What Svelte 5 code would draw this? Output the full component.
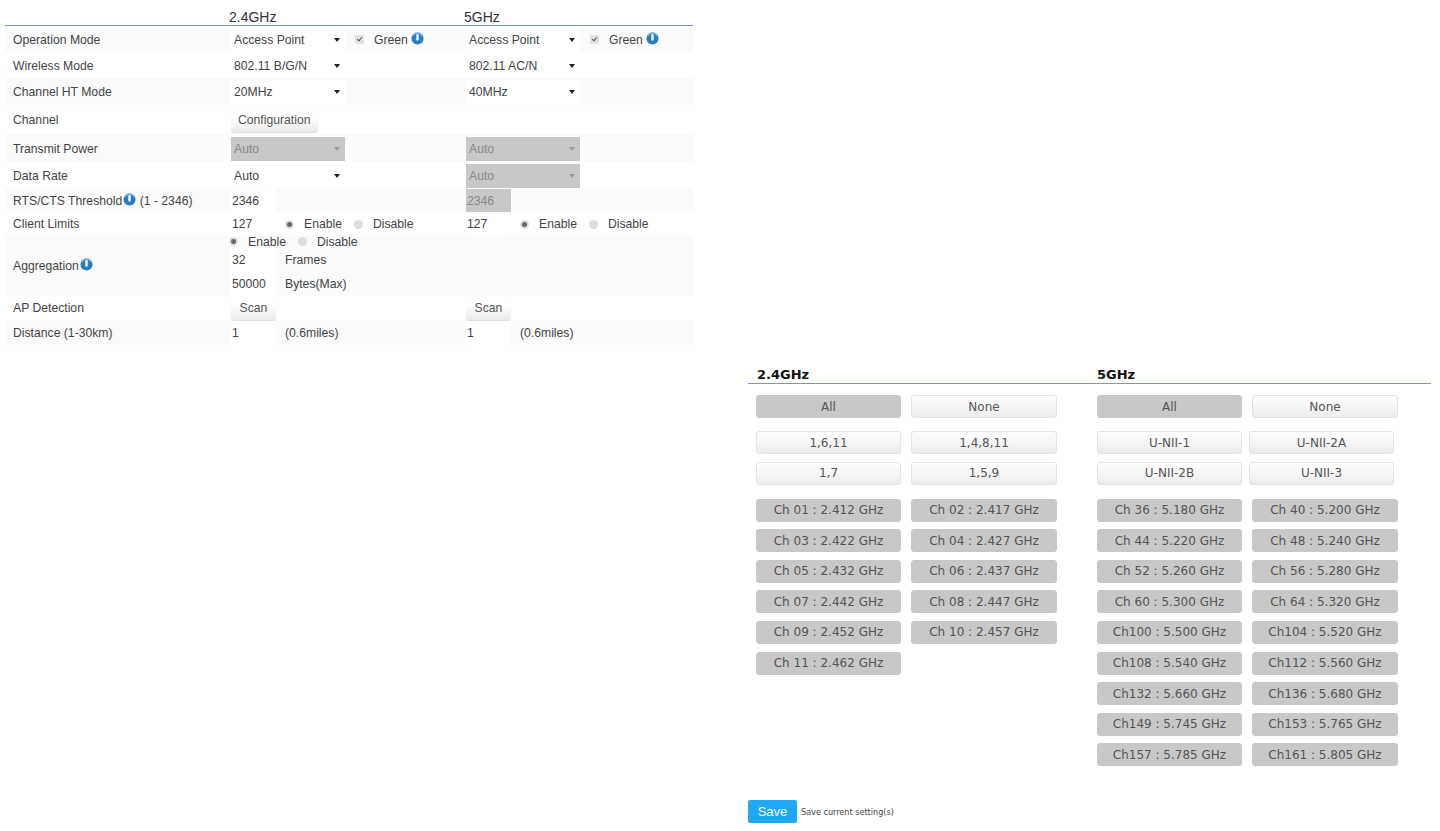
<script>
  const left24 = [["All", "on"], ["None", ""]];
  const presets24 = ["1,6,11", "1,4,8,11", "1,7", "1,5,9"];
  const presets5 = ["U-NII-1", "U-NII-2A", "U-NII-2B", "U-NII-3"];

  const ch24 = [
    "Ch 01 : 2.412 GHz", "Ch 02 : 2.417 GHz", "Ch 03 : 2.422 GHz", "Ch 04 : 2.427 GHz",
    "Ch 05 : 2.432 GHz", "Ch 06 : 2.437 GHz", "Ch 07 : 2.442 GHz", "Ch 08 : 2.447 GHz",
    "Ch 09 : 2.452 GHz", "Ch 10 : 2.457 GHz", "Ch 11 : 2.462 GHz"
  ];
  const ch5 = [
    "Ch 36 : 5.180 GHz", "Ch 40 : 5.200 GHz", "Ch 44 : 5.220 GHz", "Ch 48 : 5.240 GHz",
    "Ch 52 : 5.260 GHz", "Ch 56 : 5.280 GHz", "Ch 60 : 5.300 GHz", "Ch 64 : 5.320 GHz",
    "Ch100 : 5.500 GHz", "Ch104 : 5.520 GHz", "Ch108 : 5.540 GHz", "Ch112 : 5.560 GHz",
    "Ch132 : 5.660 GHz", "Ch136 : 5.680 GHz", "Ch149 : 5.745 GHz", "Ch153 : 5.765 GHz",
    "Ch157 : 5.785 GHz", "Ch161 : 5.805 GHz"
  ];
</script>

{#snippet info()}
  <svg class="info" viewBox="0 0 14 14" width="13" height="13" aria-hidden="true">
    <circle cx="7" cy="7" r="6.5" fill="#2a7cc0" />
    <path d="M1.6 4.2a6 6 0 0 1 10.8 0" fill="none" stroke="#8fc4ea" stroke-width="1.4" />
    <rect x="5.6" y="2.2" width="2.8" height="7.2" rx="1.2" fill="#e8f3fb" />
  </svg>
{/snippet}

{#snippet sel(value, disabled = false)}
  <span class="sel" class:off={disabled}>
    <select {disabled}><option>{value}</option></select>
  </span>
{/snippet}

{#snippet green()}
  <label class="green"><input type="checkbox" checked /><span>Green</span>{@render info()}</label>
{/snippet}

{#snippet endis(name)}
  <label class="radio"><input type="radio" {name} checked />Enable</label>
  <label class="radio"><input type="radio" {name} />Disable</label>
{/snippet}

<div class="page">
  <section class="settings">
    <div class="heads">
      <span></span><span>2.4GHz</span><span>5GHz</span>
    </div>

    <div class="row" style="height:26px">
      <div class="name">Operation Mode</div>
      <div class="cell">{@render sel("Access Point")}{@render green()}</div>
      <div class="cell">{@render sel("Access Point")}{@render green()}</div>
    </div>
    <div class="row" style="height:26px">
      <div class="name">Wireless Mode</div>
      <div class="cell">{@render sel("802.11 B/G/N")}</div>
      <div class="cell">{@render sel("802.11 AC/N")}</div>
    </div>
    <div class="row" style="height:27px">
      <div class="name">Channel HT Mode</div>
      <div class="cell">{@render sel("20MHz")}</div>
      <div class="cell">{@render sel("40MHz")}</div>
    </div>
    <div class="row" style="height:29px">
      <div class="name">Channel</div>
      <div class="cell"><button class="plain">Configuration</button></div>
      <div class="cell"></div>
    </div>
    <div class="row" style="height:28px">
      <div class="name">Transmit Power</div>
      <div class="cell">{@render sel("Auto", true)}</div>
      <div class="cell">{@render sel("Auto", true)}</div>
    </div>
    <div class="row" style="height:26px">
      <div class="name">Data Rate</div>
      <div class="cell">{@render sel("Auto")}</div>
      <div class="cell">{@render sel("Auto", true)}</div>
    </div>
    <div class="row" style="height:23px">
      <div class="name">RTS/CTS Threshold{@render info()} (1 - 2346)</div>
      <div class="cell"><input class="num" value="2346" /></div>
      <div class="cell"><input class="num" value="2346" disabled /></div>
    </div>
    <div class="row" style="height:24px">
      <div class="name">Client Limits</div>
      <div class="cell"><input class="num" value="127" />{@render endis("c24")}</div>
      <div class="cell"><input class="num" value="127" />{@render endis("c5")}</div>
    </div>
    <div class="row flat" style="height:61px">
      <div class="name">Aggregation{@render info()}</div>
      <div class="stack">
        <div class="line first">{@render endis("agg")}</div>
        <div class="line"><input class="num" value="32" /><span>Frames</span></div>
        <div class="line"><input class="num" value="50000" /><span>Bytes(Max)</span></div>
      </div>
      <div class="cell"></div>
    </div>
    <div class="row flat" style="height:24px">
      <div class="name">AP Detection</div>
      <div class="cell"><button class="plain">Scan</button></div>
      <div class="cell"><button class="plain">Scan</button></div>
    </div>
    <div class="row flat" style="height:25px">
      <div class="name">Distance (1-30km)</div>
      <div class="cell"><input class="num" value="1" /><span class="unit">(0.6miles)</span></div>
      <div class="cell"><input class="num" value="1" /><span class="unit">(0.6miles)</span></div>
    </div>
  </section>

  <section class="channels">
    <div class="chan-heads"><h3>2.4GHz</h3><h3>5GHz</h3></div>
    <div class="bands">
      <div class="band">
        <div class="grid">
          {#each left24 as [label, on]}
            <button class="ch" class:on={on === "on"}>{label}</button>
          {/each}
        </div>
        <div class="grid presets">
          {#each presets24 as p}<button class="ch">{p}</button>{/each}
        </div>
        <div class="grid list">
          {#each ch24 as c}<button class="ch on">{c}</button>{/each}
        </div>
      </div>
      <div class="band">
        <div class="grid">
          {#each left24 as [label, on]}
            <button class="ch" class:on={on === "on"}>{label}</button>
          {/each}
        </div>
        <div class="grid presets tight">
          {#each presets5 as p}<button class="ch">{p}</button>{/each}
        </div>
        <div class="grid list">
          {#each ch5 as c}<button class="ch on">{c}</button>{/each}
        </div>
      </div>
    </div>
    <div class="save-row">
      <button class="save">Save</button>
      <span>Save current setting(s)</span>
    </div>
  </section>
</div>

<style>
  :global(body) {
    margin: 0;
    background: #fff;
  }

  .page {
    display: flex;
    align-items: flex-start;
    height: 831px;
    overflow: hidden;
    font-family: "Liberation Sans", Arial, sans-serif;
    font-size: 12.2px;
    color: #444;
  }

  .settings {
    width: 688px;
    margin-left: 5px;
    flex: none;
  }

  .heads,
  .row {
    display: grid;
    grid-template-columns: 224px 235px 1fr;
    align-items: center;
  }

  .heads {
    height: 26px;
    box-sizing: border-box;
    padding-top: 8px;
    border-bottom: 1px solid #7f93c9;
    font-size: 14px;
    line-height: 16px;
    color: #333;
  }

  .row {
    box-sizing: border-box;
    padding-top: 1px;
  }

  .row.flat {
    padding-top: 0;
  }

  .row:nth-of-type(even) {
    background: #fbfbfb;
  }

  .name {
    padding-left: 8px;
    display: flex;
    align-items: center;
    white-space: pre;
  }

  .cell,
  .line {
    display: flex;
    align-items: center;
    padding-left: 2px;
  }

  .stack {
    display: flex;
    flex-direction: column;
  }

  .line {
    height: 24px;
  }

  .line.first {
    height: 13px;
    padding-left: 0;
  }

  .line span {
    margin-left: 9px;
  }

  .sel {
    position: relative;
    display: block;
    width: 114px;
    height: 24px;
    flex: none;
  }

  .sel select {
    appearance: none;
    display: block;
    width: 100%;
    height: 100%;
    border: 0;
    padding: 0 0 0 3px;
    background: #fff;
    font: inherit;
    color: #444;
    opacity: 1;
  }

  .sel::after {
    content: "";
    position: absolute;
    right: 5px;
    top: 10px;
    border: 3px solid transparent;
    border-top: 4px solid #222;
    border-bottom: 0;
    pointer-events: none;
  }

  .sel.off select {
    background: #c8c8c8;
    color: #8a8a8a;
  }

  .sel.off::after {
    border-top-color: #999;
  }

  .green {
    display: flex;
    align-items: center;
    margin-left: 10px;
  }

  .green input {
    appearance: none;
    position: relative;
    margin: 0 10px 0 0;
    width: 9px;
    height: 9px;
    background: #e2e2e2;
    border-radius: 1px;
  }

  .green input:checked::after {
    content: "";
    position: absolute;
    left: 3px;
    top: 1px;
    width: 2px;
    height: 4px;
    border: solid #555;
    border-width: 0 1.5px 1.5px 0;
    transform: rotate(40deg);
  }

  .green .info {
    margin-left: 3px;
  }

  .info {
    flex: none;
    margin-left: 1px;
    margin-top: -3px;
  }

  .radio {
    display: flex;
    align-items: center;
  }

  .radio + .radio {
    margin-left: 3px;
  }

  .radio input {
    appearance: none;
    width: 9px;
    height: 9px;
    margin: 0 10px 0 9px;
    border-radius: 50%;
    background: #ddd;
  }

  .radio input:checked {
    background: radial-gradient(circle, #666 0 2px, #ddd 3px);
  }

  .line.first .radio:first-child input {
    margin-left: 0;
  }

  .num {
    box-sizing: border-box;
    width: 45px;
    height: 24px;
    border: 0;
    padding: 0 1px;
    background: #fff;
    font: inherit;
    color: #444;
    flex: none;
  }

  .num:disabled {
    background: #c8c8c8;
    color: #8a8a8a;
  }

  .unit {
    margin-left: 9px;
  }

  .plain {
    border: 0;
    border-radius: 3px;
    padding: 0 7px;
    height: 24px;
    min-width: 45px;
    background: linear-gradient(#fff 40%, #e9e9e9);
    box-shadow: 0 1px 1px #ddd;
    font: inherit;
    color: #555;
  }

  .channels {
    width: 683px;
    margin-left: 55px;
    margin-top: 365px;
    flex: none;
    font-family: "DejaVu Sans", Verdana, sans-serif;
  }

  .chan-heads {
    display: flex;
    height: 18px;
    border-bottom: 1px solid #7f93c9;
    padding-left: 9px;
  }

  h3 {
    margin: 0;
    flex: none;
    width: 340px;
    font-size: 13px;
    line-height: 19px;
    font-weight: 700;
    color: #111;
  }

  .bands {
    display: flex;
    padding: 11px 0 0 8px;
    gap: 40px;
    height: 375px;
  }

  .band {
    width: 301px;
  }

  .grid {
    display: grid;
    grid-template-columns: 145px 146px;
    column-gap: 10px;
    row-gap: 7.6px;
  }

  .grid.tight {
    grid-template-columns: 145px 145px;
    column-gap: 7px;
  }

  .presets {
    margin-top: 13px;
  }

  .list {
    margin-top: 14px;
  }

  .ch {
    height: 23px;
    padding: 0;
    border: 1px solid #e4e4e4;
    border-radius: 3px;
    background: linear-gradient(#fff, #ececec);
    font-family: inherit;
    font-size: 12px;
    color: #555;
  }

  .ch.on {
    border-color: #c8c8c8;
    background: #c8c8c8;
  }

  .save-row {
    display: flex;
    align-items: center;
    gap: 4px;
    padding-top: 30px;
    font-size: 8.1px;
    color: #444;
  }

  .save {
    width: 49px;
    height: 23px;
    padding: 0;
    border: 0;
    border-radius: 2px;
    background: #1fa9f4;
    color: #fff;
    font-family: "Liberation Sans", Arial, sans-serif;
    font-size: 13px;
  }
</style>
